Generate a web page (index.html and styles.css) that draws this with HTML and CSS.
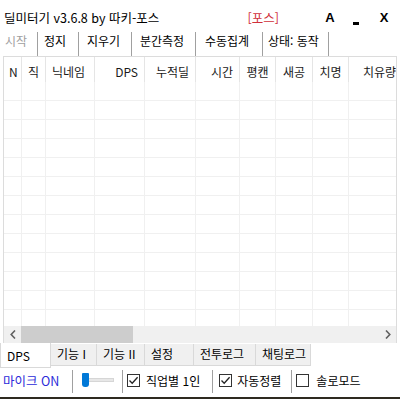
FILE: index.html
```html
<!DOCTYPE html>
<html lang="ko">
<head>
    <meta charset="UTF-8">
    <title>딜미터기</title>
    <link rel="stylesheet" href="styles.css">
</head>
<body>
    <div class="window">
        <div class="titlebar">
            <span class="title">딜미터기 v3.6.8 by 따키-포스</span>
            <span class="server">[포스]</span>
            <span class="tb-btn">A</span>
            <span class="tb-btn"><i class="min-bar"></i></span>
            <span class="tb-btn">X</span>
        </div>

        <div class="menu">
            <span class="menu-item disabled">시작</span>
            <span class="menu-item">정지</span>
            <span class="menu-item">지우기</span>
            <span class="menu-item">분간측정</span>
            <span class="menu-item">수동집계</span>
            <span class="menu-item">상태: 동작</span>
        </div>

        <div class="list">
            <div class="list-head">
                <div class="hcell left clip">N</div>
                <div class="hcell center">직</div>
                <div class="hcell left">닉네임</div>
                <div class="hcell right">DPS</div>
                <div class="hcell right">누적딜</div>
                <div class="hcell right">시간</div>
                <div class="hcell center">평캔</div>
                <div class="hcell center">새공</div>
                <div class="hcell center">치명</div>
                <div class="hcell left wide">치유량</div>
            </div>
            <div class="list-body">
                <div></div><div></div><div></div><div></div><div></div>
                <div></div><div></div><div></div><div></div><div></div>
            </div>
            <div class="hscroll">
                <div class="sb-arrow">
                    <svg width="6" height="9" viewBox="0 0 6 9"><polyline points="5,0.5 1.2,4.5 5,8.5" fill="none" stroke="#606060" stroke-width="1.6"/></svg>
                </div>
                <div class="sb-track"><div class="sb-thumb"></div></div>
                <div class="sb-arrow">
                    <svg width="6" height="9" viewBox="0 0 6 9"><polyline points="1,0.5 4.8,4.5 1,8.5" fill="none" stroke="#606060" stroke-width="1.6"/></svg>
                </div>
            </div>
        </div>

        <div class="tabs">
            <div class="tab active">DPS</div>
            <div class="tab">기능 I</div>
            <div class="tab">기능 II</div>
            <div class="tab">설정</div>
            <div class="tab">전투로그</div>
            <div class="tab">채팅로그</div>
        </div>

        <div class="toolbar">
            <span class="mic">마이크 ON</span>
            <span class="sep sep-mic"></span>
            <div class="slider">
                <div class="slider-track"></div>
                <div class="slider-thumb"></div>
            </div>
            <span class="sep sep-slider"></span>
            <label class="check opt-job">
                <span class="box checked">
                    <svg width="11" height="11" viewBox="0 0 11 11"><polyline points="1.5,5.5 4.2,8.3 9.6,2.2" fill="none" stroke="#222" stroke-width="1.3"/></svg>
                </span>
                직업별 1인
            </label>
            <span class="sep sep-job"></span>
            <label class="check opt-sort">
                <span class="box checked">
                    <svg width="11" height="11" viewBox="0 0 11 11"><polyline points="1.5,5.5 4.2,8.3 9.6,2.2" fill="none" stroke="#222" stroke-width="1.3"/></svg>
                </span>
                자동정렬
            </label>
            <span class="sep sep-sort"></span>
            <label class="check opt-solo">
                <span class="box"></span>
                솔로모드
            </label>
        </div>
        <div class="desktop-edge"></div>
    </div>
</body>
</html>
```

FILE: styles.css
```css
body {
    margin: 0;
    background-color: #fff;
    color: #000;
    font-family: "Noto Sans CJK KR", "Malgun Gothic", sans-serif;
    font-size: 12px;
}

.window {
    width: 400px;
    height: 399px;
    display: flex;
    flex-direction: column;
    overflow: hidden;
}

/* title bar */
.titlebar {
    height: 30px;
    padding: 5px 4px 0 4px;
    box-sizing: border-box;
    display: flex;
    align-items: center;
    flex-shrink: 0;
}

.title {
    font-size: 12.5px;
}

.server {
    margin-left: auto;
    margin-right: 38px;
    color: #d0303a;
    font-size: 12.5px;
}

.tb-btn {
    width: 26px;
    text-align: center;
    font-family: "Liberation Sans", sans-serif;
    font-weight: bold;
    font-size: 13px;
}

.tb-btn:last-child {
    width: 24px;
    padding-left: 3px;
}

.min-bar {
    display: inline-block;
    width: 6px;
    height: 3px;
    background: #000;
    vertical-align: -3px;
}

/* menu strip */
.menu {
    height: 26px;
    padding-top: 2px;
    box-sizing: border-box;
    display: flex;
    align-items: flex-start;
    flex-shrink: 0;
}

.menu-item {
    height: 25px;
    line-height: 18px;
    border-right: 1px solid #a0a0a0;
    box-sizing: border-box;
    white-space: nowrap;
}

.menu-item.disabled {
    color: #a0a0a0;
}

.menu-item:nth-child(1) { width: 38px; padding-left: 5px; }
.menu-item:nth-child(2) { width: 41px; padding-left: 6px; }
.menu-item:nth-child(3) { width: 53px; padding-left: 8px; }
.menu-item:nth-child(4) { width: 64px; padding-left: 8px; }
.menu-item:nth-child(5) { width: 67px; padding-left: 9px; }
.menu-item:nth-child(6) { width: 66px; padding-left: 5px; }

/* list view */
.list {
    margin: 0 3px;
    border: 1px solid #dcdcdc;
    border-bottom: 0;
    height: 287px;
    box-sizing: border-box;
    display: flex;
    flex-direction: column;
    overflow: hidden;
    flex-shrink: 0;
}

.list-head,
.list-body {
    display: grid;
    grid-template-columns: 18px 24px 49px 50px 51px 44px 36px 37px 36px 60px;
}

.list-head {
    height: 25px;
    flex-shrink: 0;
}

.hcell {
    border-right: 1px solid #e5e5e5;
    padding-top: 4px;
    line-height: 21px;
    color: #1a1a1a;
    white-space: nowrap;
    overflow: hidden;
}

.hcell.left { padding-left: 6px; }
.hcell.right { text-align: right; padding-right: 6px; }
.hcell.center { text-align: center; }
.hcell.clip { padding-left: 5px; }
.hcell.wide { padding-left: 14px; border-right: 0; }

.list-body {
    height: 244px;
    flex-shrink: 0;
    background: repeating-linear-gradient(to bottom, #fff 0, #fff 18px, #f0f0f0 18px, #f0f0f0 19px);
}

.list-body div {
    border-right: 1px solid #f0f0f0;
}

.list-body div:last-child {
    border-right: 0;
}

/* horizontal scrollbar */
.hscroll {
    height: 17px;
    display: flex;
    background: #f0f0f0;
    flex-shrink: 0;
}

.sb-arrow {
    width: 17px;
    display: flex;
    align-items: center;
    justify-content: center;
}

.sb-track {
    flex: 1;
}

.sb-thumb {
    width: 112px;
    height: 100%;
    background: #cdcdcd;
}

/* tabs */
.tabs {
    height: 25px;
    display: flex;
    align-items: flex-start;
    flex-shrink: 0;
}

.tab {
    height: 22px;
    margin-top: 1px;
    padding-left: 6px;
    line-height: 19px;
    box-sizing: border-box;
    background: #f0f0f0;
    border-right: 1px solid #d9d9d9;
    border-bottom: 1px solid #d9d9d9;
}

.tab.active {
    height: 25px;
    margin-top: 0;
    padding-top: 3px;
    background: #fff;
    border-left: 1px solid #d9d9d9;
}

.tab:nth-child(1) { width: 51px; }
.tab:nth-child(2) { width: 46px; }
.tab:nth-child(3) { width: 48px; }
.tab:nth-child(4) { width: 49px; }
.tab:nth-child(5) { width: 62px; }
.tab:nth-child(6) { width: 55px; }

/* bottom toolbar */
.toolbar {
    height: 29px;
    padding-bottom: 5px;
    box-sizing: border-box;
    display: flex;
    align-items: center;
    flex-shrink: 0;
}

.mic {
    color: #2b2bd9;
    padding-left: 3px;
    width: 60px;
    font-size: 12.5px;
}

.sep {
    width: 1px;
    height: 23px;
    margin-top: 3px;
    background: #a0a0a0;
}

.sep-mic { margin-left: 9px; }
.sep-slider { margin-left: 8px; }
.sep-job { margin-left: 12px; }
.sep-sort { margin-left: 10px; }

.slider {
    position: relative;
    margin-left: 9px;
    width: 32px;
    height: 16px;
}

.slider-track {
    position: absolute;
    left: 4px;
    right: 0;
    top: 6px;
    height: 2px;
    background: #e7e7e7;
    border: 1px solid #d6d6d6;
}

.slider-thumb {
    position: absolute;
    left: 0;
    top: 1px;
    width: 7px;
    height: 14px;
    background: #0078d7;
    border-radius: 1px 1px 3px 3px;
}

.check {
    display: flex;
    align-items: center;
    gap: 6px;
}

.opt-job { margin-left: 4px; }
.opt-sort { margin-left: 6px; gap: 5px; }
.opt-solo { margin-left: 4px; gap: 7px; }

.box {
    width: 13px;
    height: 13px;
    box-sizing: border-box;
    border: 1px solid #333;
    background: #fff;
    display: flex;
    align-items: center;
    justify-content: center;
}

.desktop-edge {
    height: 2px;
    background: #2e2a20;
    flex-shrink: 0;
}
```
